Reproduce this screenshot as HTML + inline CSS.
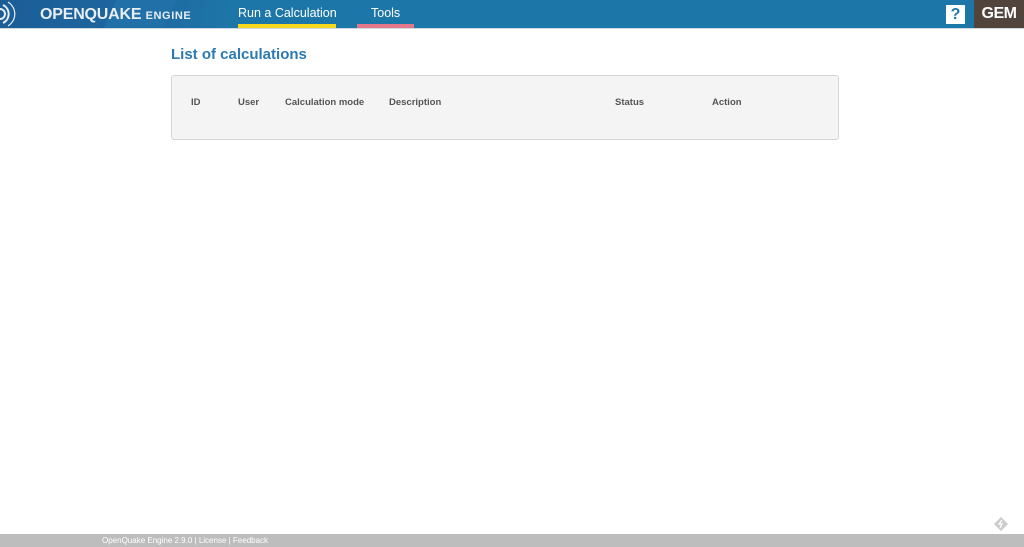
<!DOCTYPE html>
<html><head><meta charset="utf-8"><style>
*{margin:0;padding:0;box-sizing:border-box}
body{width:1024px;height:547px;background:#fff;font-family:"Liberation Sans",sans-serif;position:relative;overflow:hidden}
.hdr{position:absolute;left:0;top:0;width:1024px;height:29px;background:#1d76a8;border-bottom:1px solid #cfd8de}
.logo{position:absolute;left:0;top:0;width:230px;height:28px;background:linear-gradient(100deg,#1b5d97 0,#1e67a0 60%,#1d76a8 100%)}
.logo .t{position:absolute;left:40px;top:6px;color:#e8eef4;font-weight:bold;font-size:16px;letter-spacing:-0.2px}
.logo .t small{font-size:11px;letter-spacing:0.6px}
.nav{position:absolute;top:6px;color:#fff;font-size:12.5px}
.ul{position:absolute;top:24px;height:4px}
.help{position:absolute;left:946px;top:5px;width:19px;height:19px;background:#fff;color:#1d76a8;font-weight:bold;font-size:16px;text-align:center;line-height:19px}
.gem{position:absolute;left:974px;top:0;width:50px;height:28px;background:#51443d;color:#fff;font-weight:bold;font-size:16px;text-align:center;line-height:28px;letter-spacing:-0.5px}
h1{position:absolute;left:171px;top:46px;font-size:15px;color:#2d7ab1;font-weight:bold}
.box{position:absolute;left:171px;top:75px;width:668px;height:65px;background:#f4f4f4;border:1px solid #d6d6d6;border-radius:3px}
.box span{position:absolute;top:21px;font-size:9.5px;font-weight:bold;color:#555}
.foot{position:absolute;left:0;top:534px;width:1024px;height:13px;background:#bdbdbd;color:#fff;font-size:8px;line-height:13px;padding-left:102px}
</style></head><body>
<div class="hdr">
 <div class="logo">
  <div style="position:absolute;left:110px;top:0;width:60px;height:28px;background:#2170a8;transform:skewX(-25deg)"></div>
  <svg width="36" height="28" style="position:absolute;left:0;top:0"><g fill="none" stroke="#e8eef4" stroke-width="2"><path d="M0 9a5 5 0 0 1 0 10"/><path d="M3 5a10 10 0 0 1 0 18"/><path d="M8 2a14 14 0 0 1 0 24" stroke-width="1.2"/></g></svg>
  <div class="t">OPENQUAKE <small>ENGINE</small></div>
 </div>
 <div class="nav" style="left:238px">Run a Calculation</div>
 <div class="ul" style="left:238px;width:98px;background:#f5d81c"></div>
 <div class="nav" style="left:371px">Tools</div>
 <div class="ul" style="left:357px;width:57px;background:#e3788a"></div>
 <div class="help">?</div>
 <div class="gem">GEM</div>
</div>
<h1>List of calculations</h1>
<div class="box">
 <span style="left:19px">ID</span><span style="left:66px">User</span><span style="left:113px">Calculation mode</span><span style="left:217px">Description</span><span style="left:443px">Status</span><span style="left:540px">Action</span>
</div>
<svg width="16" height="16" style="position:absolute;left:993px;top:516px"><path d="M8 1L15 8L8 15L1 8Z" fill="#ccc"/><path d="M9 4L6 8H9L7 12" stroke="#fff" fill="none" stroke-width="1.2"/></svg>
<div class="foot">OpenQuake Engine 2.9.0 | License | Feedback</div>
</body></html>
